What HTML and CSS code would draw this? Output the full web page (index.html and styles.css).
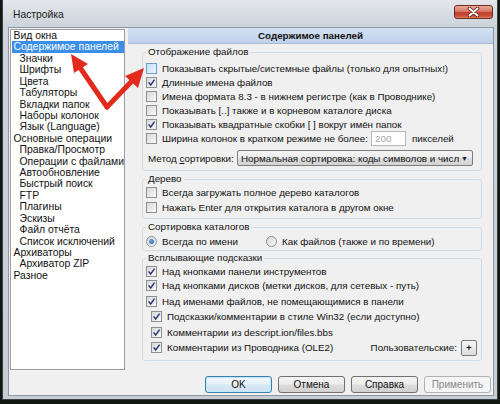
FILE: index.html
```html
<!DOCTYPE html>
<html lang="ru">
<head>
<meta charset="utf-8">
<title>Настройка</title>
<link rel="stylesheet" href="styles.css">
</head>
<body>
<div class="window">
  <div class="titlebar">
    <span class="title">Настройка</span>
    <span class="close"><svg width="13" height="10" viewBox="0 0 13 10"><path d="M2.5 1.5 L10.5 8.5 M10.5 1.5 L2.5 8.5" stroke="#5a2019" stroke-width="3.6" stroke-linecap="round"/><path d="M2.5 1.5 L10.5 8.5 M10.5 1.5 L2.5 8.5" stroke="#fff" stroke-width="1.9" stroke-linecap="round"/></svg></span>
  </div>
  <div class="client">
    <div class="main">
      <ul class="tree">
        <li>Вид окна</li>
        <li class="sel">Содержимое панелей</li>
        <li class="sub">Значки</li>
        <li class="sub">Шрифты</li>
        <li class="sub">Цвета</li>
        <li class="sub">Табуляторы</li>
        <li class="sub">Вкладки папок</li>
        <li class="sub">Наборы колонок</li>
        <li class="sub">Язык (Language)</li>
        <li>Основные операции</li>
        <li class="sub">Правка/Просмотр</li>
        <li class="sub">Операции с файлами</li>
        <li class="sub">Автообновление</li>
        <li class="sub">Быстрый поиск</li>
        <li class="sub">FTP</li>
        <li class="sub">Плагины</li>
        <li class="sub">Эскизы</li>
        <li class="sub">Файл отчёта</li>
        <li class="sub">Список исключений</li>
        <li>Архиваторы</li>
        <li class="sub">Архиватор ZIP</li>
        <li>Разное</li>
      </ul>
      <div class="page">
        <div class="page-head">Содержимое панелей</div>

        <fieldset class="group g-files">
          <legend>Отображение файлов</legend>
          <div class="row"><span class="cb hot"></span>Показывать скрытые/системные файлы (только для опытных!)</div>
          <div class="row"><span class="cb"><svg viewBox="0 0 9 9" width="9" height="9"><path d="M1.6 4.4 L3.7 7 L7.6 1.6" fill="none" stroke="#2b3a78" stroke-width="1.5"/></svg></span>Длинные имена файлов</div>
          <div class="row"><span class="cb"></span>Имена формата 8.3 - в нижнем регистре (как в Проводнике)</div>
          <div class="row"><span class="cb"></span>Показывать [..] также и в корневом каталоге диска</div>
          <div class="row"><span class="cb"><svg viewBox="0 0 9 9" width="9" height="9"><path d="M1.6 4.4 L3.7 7 L7.6 1.6" fill="none" stroke="#2b3a78" stroke-width="1.5"/></svg></span>Показывать квадратные скобки [ ] вокруг имён папок</div>
          <div class="row"><span class="cb"></span><span class="fixlabel">Ширина колонок в кратком режиме не более:</span><span class="edit">200</span><span class="unit">пикселей</span></div>
          <div class="row sort"><span class="sortlabel">Метод <u>с</u>ортировки:</span><span class="combo"><span>Нормальная сортировка: коды символов и числ</span><span class="drop">▼</span></span></div>
        </fieldset>

        <fieldset class="group g-tree">
          <legend>Дерево</legend>
          <div class="row"><span class="cb"></span>Всегда загружать полное дерево каталогов</div>
          <div class="row"><span class="cb"></span>Нажать Enter для открытия каталога в другом окне</div>
        </fieldset>

        <fieldset class="group g-sort">
          <legend>Сортировка каталогов</legend>
          <div class="row">
            <span class="radio-item first"><span class="rb on"></span>Всегда по имени</span>
            <span class="radio-item"><span class="rb"></span>Как файлов (также и по времени)</span>
          </div>
        </fieldset>

        <fieldset class="group g-tips">
          <legend>Всплывающие подсказки</legend>
          <div class="row first"><span class="cb"><svg viewBox="0 0 9 9" width="9" height="9"><path d="M1.6 4.4 L3.7 7 L7.6 1.6" fill="none" stroke="#2b3a78" stroke-width="1.5"/></svg></span>Над кнопками панели инструментов</div>
          <div class="row"><span class="cb"><svg viewBox="0 0 9 9" width="9" height="9"><path d="M1.6 4.4 L3.7 7 L7.6 1.6" fill="none" stroke="#2b3a78" stroke-width="1.5"/></svg></span>Над кнопками дисков (метки дисков, для сетевых - путь)</div>
          <div class="row"><span class="cb"><svg viewBox="0 0 9 9" width="9" height="9"><path d="M1.6 4.4 L3.7 7 L7.6 1.6" fill="none" stroke="#2b3a78" stroke-width="1.5"/></svg></span>Над именами файлов, не помещающимися в панели</div>
          <div class="row indent"><span class="cb"><svg viewBox="0 0 9 9" width="9" height="9"><path d="M1.6 4.4 L3.7 7 L7.6 1.6" fill="none" stroke="#2b3a78" stroke-width="1.5"/></svg></span>Подсказки/комментарии в стиле Win32 (если доступно)</div>
          <div class="row indent"><span class="cb"><svg viewBox="0 0 9 9" width="9" height="9"><path d="M1.6 4.4 L3.7 7 L7.6 1.6" fill="none" stroke="#2b3a78" stroke-width="1.5"/></svg></span>Комментарии из descript.ion/files.bbs</div>
          <div class="row indent"><span class="cb"><svg viewBox="0 0 9 9" width="9" height="9"><path d="M1.6 4.4 L3.7 7 L7.6 1.6" fill="none" stroke="#2b3a78" stroke-width="1.5"/></svg></span>Комментарии из Проводника (OLE2)<span class="custom">Пользовательские:</span><span class="plus">+</span></div>
        </fieldset>
      </div>
    </div>
    <div class="buttons">
      <span class="btn default">OK</span>
      <span class="btn">Отмена</span>
      <span class="btn">Справка</span>
      <span class="btn disabled">Применить</span>
    </div>
  </div>
</div>
<svg class="arrows" width="500" height="404" viewBox="0 0 500 404">
  <g stroke="#e32b1d" stroke-width="5" stroke-linecap="round" fill="none">
    <path d="M107 107 L81 69"/>
    <path d="M107 107 L131 82"/>
  </g>
  <g fill="#e32b1d">
    <polygon points="71,54 88,64 74,73"/>
    <polygon points="144,68 138,88 125,76"/>
  </g>
</svg>
</body>
</html>
```
FILE: styles.css
```css
html, body {
  margin: 0;
  padding: 0;
}
body {
  width: 500px;
  height: 404px;
  overflow: hidden;
  background: #0f1811;
  font-family: "Liberation Sans", Arial, sans-serif;
  color: #111;
  position: relative;
}
.window {
  margin-left: 2px;
  width: 496px;
  height: 400px;
  box-sizing: border-box;
  border: 1px solid #3a4046;
  border-top: none;
  background: linear-gradient(#e3e7eb 0, #ccd3da 27px, #c6cdd5 100%);
  padding: 0 3px 3px 5px;
  display: flex;
  flex-direction: column;
}
.titlebar {
  height: 27px;
  flex: none;
  display: flex;
  justify-content: space-between;
  align-items: flex-start;
  margin-left: -5px;
  margin-right: -3px;
  padding: 0 4px 0 10px;
}
.title {
  font-size: 10.3px;
  line-height: 12px;
  margin-top: 9px;
  color: #1b1b1b;
}
.close {
  margin-top: 5px;
  width: 39px;
  height: 14px;
  box-sizing: border-box;
  border: 1px solid #6c2b25;
  border-radius: 3px;
  background: linear-gradient(#eaa898 0, #d7786a 45%, #c3402f 55%, #c8503b 85%, #e08a62 100%);
  display: flex;
  align-items: center;
  justify-content: center;
}
.close svg { display: block; }

.client {
  flex: 1;
  border: 1px solid #8f969e;
  background: #f0f0f0;
  display: flex;
  flex-direction: column;
}
.main {
  display: flex;
  height: 343px;
  flex: none;
}
.tree {
  list-style: none;
  margin: 1px 0 0 1px;
  padding: 0;
  width: 115px;
  height: 341px;
  box-sizing: border-box;
  border: 1px solid #9a9ea4;
  background: #fff;
  font-size: 10.4px;
  flex: none;
}
.tree li {
  line-height: 11.43px;
  height: 11.43px;
  margin-left: 1px;
  padding-left: 1.5px;
  white-space: nowrap;
}
.tree li.sub { padding-left: 7.5px; }
.tree li.sel {
  background: #3a8ee6;
  color: #fff;
}

.page {
  flex: 1;
  margin-left: 3px;
  font-size: 9.8px;
  display: flex;
  flex-direction: column;
}
.page-head {
  height: 16px;
  box-sizing: border-box;
  background: linear-gradient(#d3e1f2, #bfd2ea);
  border-bottom: 1px solid #a9bcd5;
  font-weight: bold;
  font-size: 9.8px;
  text-align: center;
  line-height: 15px;
  color: #111;
}
.group {
  margin: 1px 11px 0 14px;
  border: 1px solid #d2dbe2;
  border-radius: 3px;
  padding: 0 4px 0 3px;
  min-inline-size: 0;
}
.group legend {
  padding: 0 2px;
  line-height: 12px;
  height: 12px;
  font-size: 9.8px;
}
.row {
  display: flex;
  align-items: center;
  height: 14px;
  white-space: nowrap;
}
.cb {
  width: 9px;
  height: 9px;
  border: 1px solid #8e8f8f;
  background: linear-gradient(135deg, #d8d8d8, #f9f9f9);
  margin-right: 5px;
  flex: none;
  display: flex;
}
.cb.hot {
  border-color: #6f9cc8;
  background: linear-gradient(135deg, #c5e2f7, #e8f5fd);
}
.cb svg { display: block; }

.g-files { margin-top: 2px; padding-top: 3px; padding-bottom: 4px; }
.fixlabel { width: 209px; flex: none; }
.edit {
  width: 35px;
  height: 15px;
  box-sizing: border-box;
  border: 1px solid #b5b9be;
  background: #fff;
  color: #a8a8a8;
  padding-left: 3px;
  line-height: 13px;
  flex: none;
}
.unit { margin-left: 6px; }
.row.sort { height: 16px; margin-top: 5px; padding-left: 2px; }
.sortlabel { width: 89px; flex: none; }
.sortlabel u, .custom u { text-decoration: underline; }
.combo {
  width: 236px;
  height: 16px;
  box-sizing: border-box;
  border: 1px solid #7d7d7d;
  border-radius: 2px;
  background: linear-gradient(#f4f4f4 0, #ececec 50%, #dedede 51%, #d3d3d3 100%);
  display: flex;
  align-items: center;
  justify-content: space-between;
  padding: 0 4px 0 3px;
}
.drop { font-size: 7px; color: #222; }

.g-tree { margin-top: 2px; padding-bottom: 3px; }
.g-tree .row { height: 15px; }
.g-sort { margin-top: 2px; padding-top: 1px; padding-bottom: 2px; }
.radio-item { display: flex; align-items: center; }
.radio-item.first { width: 120px; }
.rb {
  width: 9px;
  height: 9px;
  border: 1px solid #8e8f8f;
  border-radius: 50%;
  background: linear-gradient(135deg, #d8d8d8, #fafafa);
  margin-right: 5px;
  display: flex;
  align-items: center;
  justify-content: center;
}
.rb.on::after {
  content: "";
  width: 5px;
  height: 5px;
  border-radius: 50%;
  background: radial-gradient(circle at 40% 40%, #6fb2ea, #1c4f93);
}
.g-tips { margin-top: 1px; padding-bottom: 4px; }
.g-tips .row { height: 15.5px; }
.g-tips .row.first { height: 14px; }
.row.indent { padding-left: 5px; }
.custom { margin-left: auto; margin-right: 4px; }
.plus {
  width: 16px;
  height: 16px;
  box-sizing: border-box;
  border: 1px solid #7a7a7a;
  border-radius: 2px;
  background: linear-gradient(#f6f6f6, #dcdcdc);
  display: flex;
  align-items: center;
  justify-content: center;
  font-size: 9px;
  font-weight: bold;
}

.buttons {
  display: flex;
  justify-content: flex-end;
  gap: 6px;
  margin-top: 5px;
  padding-right: 2px;
}
.btn {
  width: 67px;
  height: 17px;
  box-sizing: border-box;
  border: 1px solid #707070;
  border-radius: 3px;
  background: linear-gradient(#f4f4f4 0, #ececec 48%, #dddddd 52%, #d0d0d0 100%);
  display: flex;
  align-items: center;
  justify-content: center;
  font-size: 10px;
  color: #111;
}
.btn.default {
  border-color: #3c7fb1;
  box-shadow: inset 0 0 0 1px #bfe7fb;
  background: linear-gradient(#f2f8fc 0, #e6f1f9 48%, #d8e9f5 52%, #cfe2f1 100%);
}
.btn.disabled {
  border-color: #adb2b5;
  background: #f4f4f4;
  color: #8a8a8a;
}

.arrows {
  position: absolute;
  left: 0;
  top: 0;
  pointer-events: none;
}
```
